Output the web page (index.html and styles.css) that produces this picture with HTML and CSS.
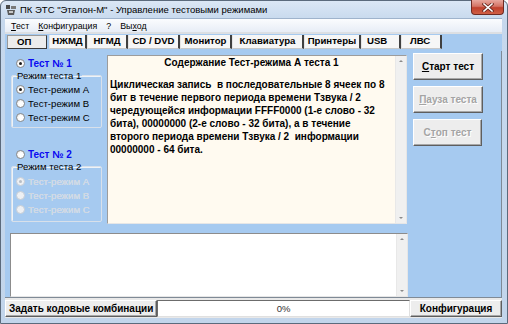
FILE: index.html
```html
<!DOCTYPE html>
<html lang="ru">
<head>
<meta charset="utf-8">
<title>ПК ЭТС</title>
<link rel="stylesheet" href="styles.css">
</head>
<body>
<div class="window">
  <div class="titlebar">
    <svg class="app-icon" width="12" height="12" viewBox="0 0 12 12">
      <rect x="1" y="1" width="4" height="4" fill="#4a4a4a"/>
      <rect x="6" y="2" width="5" height="3" fill="#7a7a7a"/>
      <path d="M2 6 L10 6 L9 11 L3 11 Z" fill="#5a5a5a"/>
      <rect x="4" y="7" width="4" height="2" fill="#c8c8c8"/>
    </svg>
    <span class="title">ПК ЭТС "Эталон-М" - Управление тестовыми режимами</span>
    <div class="close">
      <svg width="12" height="9" viewBox="0 0 12 9">
        <path d="M2 1 L10 8 M10 1 L2 8" stroke="#6a2a22" stroke-width="3.2" stroke-linecap="square"/>
        <path d="M2 1 L10 8 M10 1 L2 8" stroke="#ffffff" stroke-width="1.6" stroke-linecap="square"/>
      </svg>
    </div>
  </div>
  <div class="client">
    <div class="menubar">
      <span class="menu-item"><u>Т</u>ест</span>
      <span class="menu-item"><u>К</u>онфигурация</span>
      <span class="menu-item">?</span>
      <span class="menu-item">Вы<u>х</u>од</span>
    </div>
    <div class="tabs">
      <div class="tab tab-active t-op">ОП</div>
      <div class="tab t-hdd">НЖМД</div>
      <div class="tab t-fdd">НГМД</div>
      <div class="tab t-cd">CD / DVD</div>
      <div class="tab t-mon">Монитор</div>
      <div class="tab t-kbd">Клавиатура</div>
      <div class="tab t-prn">Принтеры</div>
      <div class="tab t-usb">USB</div>
      <div class="tab t-lan">ЛВС</div>
    </div>
    <div class="main">
      <div class="top">
        <div class="left">
          <div class="test-row">
            <span class="radio checked"></span>
            <span class="test-label">Тест № 1</span>
          </div>
          <fieldset class="group">
            <legend>Режим теста 1</legend>
            <div class="opt"><span class="radio checked"></span>Тест-режим А</div>
            <div class="opt"><span class="radio"></span>Тест-режим В</div>
            <div class="opt"><span class="radio"></span>Тест-режим С</div>
          </fieldset>
          <div class="test-row test-row-2">
            <span class="radio"></span>
            <span class="test-label">Тест № 2</span>
          </div>
          <fieldset class="group group-2 disabled">
            <legend>Режим теста 2</legend>
            <div class="opt"><span class="radio checked"></span>Тест-режим А</div>
            <div class="opt"><span class="radio"></span>Тест-режим В</div>
            <div class="opt"><span class="radio"></span>Тест-режим С</div>
          </fieldset>
        </div>
        <div class="content">
          <div class="text">
            <div class="content-title">Содержание Тест-режима А теста 1</div>
            <div class="content-body">Циклическая запись &nbsp;в последовательные 8 ячеек по 8<br>бит в течение первого периода времени Тзвука / 2<br>чередующейся информации FFFF0000 (1-е слово - 32<br>бита), 00000000 (2-е слово - 32 бита), а в течение<br>второго периода времени Тзвука / 2 &nbsp;информации<br>00000000 - 64 бита.</div>
          </div>
          <div class="vscroll">
            <span class="arrow up"></span>
            <span class="arrow down"></span>
          </div>
        </div>
        <div class="buttons">
          <div class="btn"><u>С</u>тарт тест</div>
          <div class="btn btn-disabled"><u>П</u>ауза теста</div>
          <div class="btn btn-disabled btn-stop">С<u>т</u>оп тест</div>
        </div>
      </div>
      <div class="log">
        <div class="log-area"></div>
        <div class="vscroll">
          <span class="arrow up"></span>
          <span class="arrow down"></span>
        </div>
      </div>
    </div>
    <div class="bottombar">
      <div class="btn btn-codes">Задать кодовые комбинации</div>
      <div class="progress">0%</div>
      <div class="btn btn-config">Конфигурация</div>
    </div>
  </div>
</div>
</body>
</html>
```

FILE: styles.css
```css
* { box-sizing: border-box; }

html, body {
  margin: 0;
  padding: 0;
  width: 508px;
  height: 324px;
  overflow: hidden;
  background: #ffffff;
  font-family: "Liberation Sans", Arial, sans-serif;
}

.window {
  width: 508px;
  height: 324px;
  display: flex;
  flex-direction: column;
  border: 1px solid #5b6a7c;
  border-radius: 6px 6px 0 0;
  background: linear-gradient(#dbe7f5 0px, #c6d8ed 20px, #c2d5eb 100%);
  padding: 0 5px 5px 4px;
}

.titlebar {
  height: 18px;
  display: flex;
  align-items: center;
  position: relative;
}

.app-icon {
  margin-top: 1px;
  flex: none;
}

.title {
  margin-left: 3px;
  font-size: 9.5px;
  color: #000;
  white-space: nowrap;
}

.close {
  position: absolute;
  right: -2px;
  top: -1px;
  width: 33px;
  height: 15px;
  border: 1px solid #6e2a22;
  border-top: none;
  border-radius: 0 0 4px 4px;
  background: linear-gradient(#e8a89e 0%, #d47364 45%, #c0402c 55%, #cf5f45 100%);
  display: flex;
  align-items: center;
  justify-content: center;
}

.client {
  flex: 1;
  display: flex;
  flex-direction: column;
  border-top: 1px solid #9fb3cc;
}

.menubar {
  height: 13px;
  display: flex;
  align-items: center;
  background: linear-gradient(#fbfcfe, #e7edf6);
  font-size: 8.8px;
  padding-left: 6px;
}

.menu-item {
  margin-right: 9px;
  white-space: nowrap;
}

.tabs {
  height: 19px;
  display: flex;
  align-items: flex-start;
  background: #a6caf0;
  border-top: 2px solid #dcdfe3;
  padding: 1px 0 0 2px;
}

.tab {
  height: 14px;
  background: #f6f6f6;
  font-size: 9.6px;
  font-weight: bold;
  line-height: 12px;
  white-space: nowrap;
  overflow: hidden;
  text-align: center;
  border-left: 1px solid #e4e4e4;
  border-right: 2px solid #404040;
  border-bottom: 1px solid #c8c8c8;
}

.tab-active {
  background: #ececec;
  border: 1px solid #3a3a3a;
  border-top-color: #9a9a9a;
  border-left-color: #9a9a9a;
  text-align: left;
  padding-left: 9px;
  margin-right: 2px;
}

.t-op { width: 40px; }
.t-hdd { width: 38px; }
.t-fdd { width: 41px; }
.t-cd { width: 52px; }
.t-mon { width: 52px; }
.t-kbd { width: 72px; }
.t-prn { width: 57px; }
.t-usb { width: 40px; text-align: left; padding-left: 5px; }
.t-lan { width: 41px; text-align: left; padding-left: 8px; }

.main {
  height: 247px;
  background: #a6caf0;
  border-right: 1px solid #7f8a96;
  border-bottom: 1px solid #7f8a96;
  display: flex;
  flex-direction: column;
}

.top {
  display: flex;
  height: 173px;
}

.left {
  width: 102px;
  flex: none;
  padding-top: 6px;
}

.test-row {
  height: 12px;
  display: flex;
  align-items: center;
  padding-left: 11px;
}

.test-row-2 {
  margin-top: 20px;
}

.test-label {
  margin-left: 3px;
  font-size: 10px;
  font-weight: bold;
  color: #0b0bf0;
}

.radio {
  width: 9px;
  height: 9px;
  flex: none;
  border-radius: 50%;
  border: 1px solid #8a8a8a;
  background: radial-gradient(circle at 60% 60%, #ffffff 40%, #dcdcdc 100%);
  display: flex;
  align-items: center;
  justify-content: center;
}

.radio.checked::after {
  content: "";
  width: 3px;
  height: 3px;
  border-radius: 50%;
  background: #1a1a1a;
}

.group {
  margin: 1px 0 0 6px;
  width: 91px;
  padding: 1px 0 3px 4px;
  border: 1px solid #d8e0ea;
  box-shadow: inset 1px 1px 0 #eef3f8;
  border-radius: 2px;
}

.group-2 {
  padding-top: 2px;
  padding-bottom: 5px;
}

.group legend {
  font-size: 9.6px;
  line-height: 11px;
  padding: 0 1px;
  color: #000;
}

.opt {
  height: 14px;
  display: flex;
  align-items: center;
  font-size: 9.6px;
  white-space: nowrap;
}

.opt .radio {
  margin-right: 3px;
}

.disabled .opt {
  color: #cdd5df;
  text-shadow: 0 0 0.5px #eef2f6;
}

.disabled .radio {
  border-color: #c4ccd6;
  background: #eef0f3;
}

.disabled .radio.checked::after {
  background: #b8bec6;
}

.content {
  width: 300px;
  height: 169px;
  margin-top: 4px;
  flex: none;
  display: flex;
  background: #fffaf0;
  border: 1px solid;
  border-color: #9c9c9c #e6e6e6 #e6e6e6 #9c9c9c;
}

.text {
  flex: 1;
  font-size: 10px;
  font-weight: bold;
  line-height: 13px;
  white-space: nowrap;
}

.content-title {
  text-align: center;
  margin-bottom: 9px;
}

.content-body {
  padding-left: 2px;
}

.vscroll {
  width: 11px;
  flex: none;
  background: #f0f0f0;
  border-left: 1px solid #e8e8e8;
  display: flex;
  flex-direction: column;
  justify-content: space-between;
  align-items: center;
  padding: 4px 0;
}

.arrow {
  width: 0;
  height: 0;
  border-left: 2px solid transparent;
  border-right: 2px solid transparent;
}

.arrow.up {
  border-bottom: 2px solid #8a8a8a;
}

.arrow.down {
  border-top: 2px solid #8a8a8a;
}

.buttons {
  display: flex;
  flex-direction: column;
  gap: 6px;
  padding-top: 2px;
  margin-left: 6px;
}

.btn {
  width: 70px;
  height: 27px;
  display: flex;
  align-items: center;
  justify-content: center;
  background: #ededed;
  font-size: 10px;
  font-weight: bold;
  color: #000;
  white-space: nowrap;
  border: 1px solid;
  border-color: #ffffff #5e5e5e #5e5e5e #ffffff;
  box-shadow: inset -1px -1px 0 #a8a8a8;
}

.btn-disabled {
  color: #a4a4a4;
  text-shadow: 1px 1px 0 #ffffff;
}

.btn-stop {
  width: 69px;
}

.log {
  margin: 9px 0 0 5px;
  width: 398px;
  height: 64px;
  display: flex;
  background: #fff;
  border: 1px solid;
  border-color: #8c8c8c #e6e6e6 #e6e6e6 #8c8c8c;
}

.log-area {
  flex: 1;
}

.bottombar {
  height: 20px;
  display: flex;
  padding-top: 2px;
  background: #e9e9e9;
}

.btn-codes {
  width: 152px;
  height: 17px;
  justify-content: flex-start;
  padding-left: 3px;
}

.progress {
  width: 253px;
  height: 17px;
  background: #fff;
  border: 1px solid;
  border-color: #6c6c6c #e0e0e0 #e0e0e0 #6c6c6c;
  font-size: 9.5px;
  color: #333;
  display: flex;
  align-items: center;
  justify-content: center;
}

.btn-config {
  width: 92px;
  height: 17px;
}
```
